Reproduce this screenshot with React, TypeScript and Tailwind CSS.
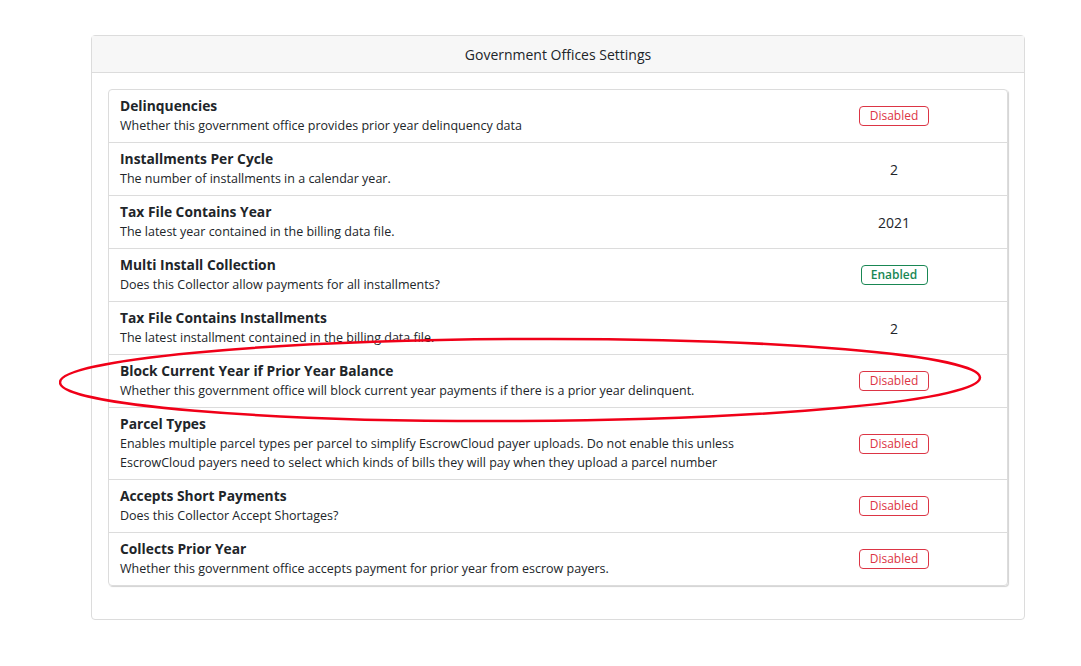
import React from 'react';

type Setting = {
	title: string;
	description: React.ReactNode;
	value: 'enabled' | 'disabled' | string;
};

const settings: Setting[] = [
	{ title: 'Delinquencies', description: 'Whether this government office provides prior year delinquency data', value: 'disabled' },
	{ title: 'Installments Per Cycle', description: 'The number of installments in a calendar year.', value: '2' },
	{ title: 'Tax File Contains Year', description: 'The latest year contained in the billing data file.', value: '2021' },
	{ title: 'Multi Install Collection', description: 'Does this Collector allow payments for all installments?', value: 'enabled' },
	{ title: 'Tax File Contains Installments', description: 'The latest installment contained in the billing data file.', value: '2' },
	{
		title: 'Block Current Year if Prior Year Balance',
		description: 'Whether this government office will block current year payments if there is a prior year delinquent.',
		value: 'disabled',
	},
	{
		title: 'Parcel Types',
		description: (
			<>
				Enables multiple parcel types per parcel to simplify EscrowCloud payer uploads. Do not enable this unless
				<br />
				EscrowCloud payers need to select which kinds of bills they will pay when they upload a parcel number
			</>
		),
		value: 'disabled',
	},
	{ title: 'Accepts Short Payments', description: 'Does this Collector Accept Shortages?', value: 'disabled' },
	{ title: 'Collects Prior Year', description: 'Whether this government office accepts payment for prior year from escrow payers.', value: 'disabled' },
];

function Value({ value }: { value: string }) {
	if (value === 'disabled') {
		return (
			<span className="inline-flex h-[20px] w-[70px] items-center justify-center rounded-[4px] border border-[#dc3545] text-[12px] text-[#dc3545]">
				Disabled
			</span>
		);
	}
	if (value === 'enabled') {
		return (
			<span className="inline-flex h-[20px] w-[67px] items-center justify-center rounded-[4px] border border-[#198754] text-[12px] font-semibold text-[#198754]">
				Enabled
			</span>
		);
	}
	return <span className="text-[14px] text-[#212529]">{value}</span>;
}

export default function App() {
	return (
		<div className="min-h-screen bg-white pt-[35px] font-['Open_Sans',sans-serif] text-[#212529]">
			<div className="relative ml-[91px] w-[934px] rounded-[4px] border border-[#dcdcdc]">
				<div className="flex h-[37px] items-center justify-center border-b border-[#dcdcdc] bg-[#f7f7f7] text-[14px]">
					Government Offices Settings
				</div>
				<div className="px-4 pt-4 pb-[33px]">
					<div className="rounded-[4px] border border-[#dcdcdc] shadow-[1px_1px_1px_rgba(0,0,0,0.18)]">
						{settings.map((s, i) => (
							<div key={s.title} className={`flex ${i > 0 ? 'border-t border-[#dcdcdc]' : ''}`}>
								<div className="flex-1 pt-[6px] pb-[7px] pl-[11px]">
									<div className="text-[13.8px] leading-[20px] font-bold">{s.title}</div>
									<div className="text-[12.5px] leading-[19px]">{s.description}</div>
								</div>
								<div className="flex w-[226px] items-center justify-center">
									<Value value={s.value} />
								</div>
							</div>
						))}
					</div>
				</div>
				<svg className="pointer-events-none absolute top-[299px] left-[-33px]" width="925" height="90" viewBox="0 0 925 90">
					<ellipse cx="461" cy="45" rx="460" ry="41" fill="none" stroke="#f00018" strokeWidth="2.5" transform="rotate(-0.3 461 45)" />
				</svg>
			</div>
		</div>
	);
}
